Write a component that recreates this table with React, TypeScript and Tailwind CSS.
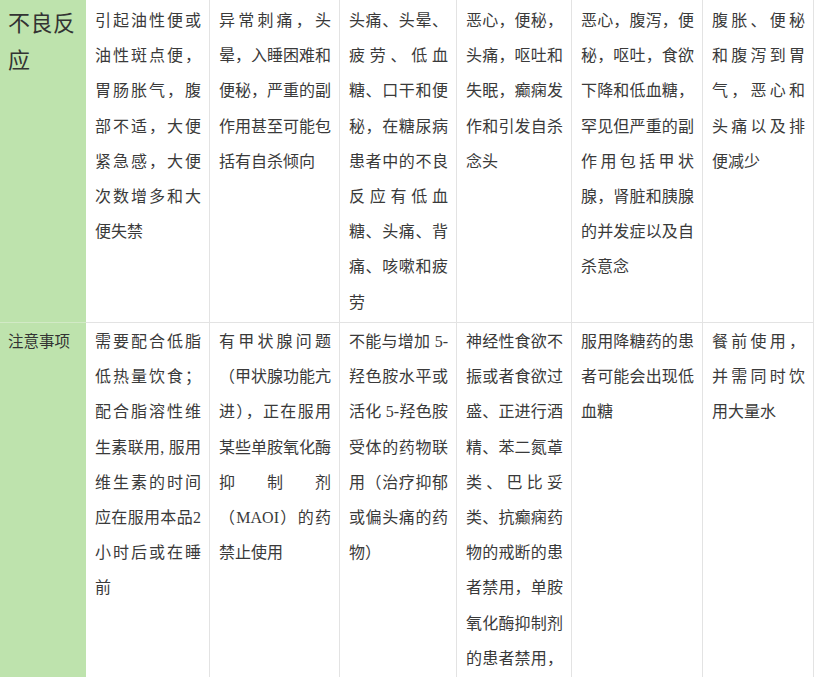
import React from "react";

type CellProps = {
  lines: string[];
  top?: boolean;
  cut?: boolean;
};

// 每行文字单独成行，整行两端对齐，最后一行左对齐
function Cell({ lines, top, cut }: CellProps) {
  return (
    <div
      className={`border-r border-[#e3e3e3] pl-[9px] pr-[8px] ${
        top ? "h-[323px] border-b pt-[3px]" : "h-[354px] pt-[1px]"
      }`}
    >
      {lines.map((line, i) => {
        const last = i === lines.length - 1 && !cut;
        return (
          <div
            key={i}
            className={`h-[35.2px] leading-[35.2px] ${
              last ? "text-left" : "text-justify [text-align-last:justify]"
            }`}
          >
            {line}
          </div>
        );
      })}
    </div>
  );
}

const row1: string[][] = [
  ["引起油性便或", "油性斑点便，", "胃肠胀气，腹", "部不适，大便", "紧急感，大便", "次数增多和大", "便失禁"],
  ["异常刺痛，头", "晕，入睡困难和", "便秘，严重的副", "作用甚至可能包", "括有自杀倾向"],
  ["头痛、头晕、", "疲劳、低血", "糖、口干和便", "秘，在糖尿病", "患者中的不良", "反应有低血", "糖、头痛、背", "痛、咳嗽和疲", "劳"],
  ["恶心，便秘，", "头痛，呕吐和", "失眠，癫痫发", "作和引发自杀", "念头"],
  ["恶心，腹泻，便", "秘，呕吐，食欲", "下降和低血糖，", "罕见但严重的副", "作用包括甲状", "腺，肾脏和胰腺", "的并发症以及自", "杀意念"],
  ["腹胀、便秘", "和腹泻到胃", "气，恶心和", "头痛以及排", "便减少"],
];

const row2: string[][] = [
  ["需要配合低脂", "低热量饮食；", "配合脂溶性维", "生素联用, 服用", "维生素的时间", "应在服用本品2", "小时后或在睡", "前"],
  ["有甲状腺问题", "（甲状腺功能亢", "进），正在服用", "某些单胺氧化酶", "抑制剂", "（MAOI）的药", "禁止使用"],
  ["不能与增加 5-", "羟色胺水平或", "活化 5-羟色胺", "受体的药物联", "用（治疗抑郁", "或偏头痛的药", "物）"],
  ["神经性食欲不", "振或者食欲过", "盛、正进行酒", "精、苯二氮䓬", "类、巴比妥", "类、抗癫痫药", "物的戒断的患", "者禁用，单胺", "氧化酶抑制剂", "的患者禁用，"],
  ["服用降糖药的患", "者可能会出现低", "血糖"],
  ["餐前使用，", "并需同时饮", "用大量水"],
];

export default function App() {
  return (
    <div
      className="h-[677px] w-[814px] overflow-hidden bg-white text-[16px] text-[#3a3a3a]"
      style={{ fontFamily: '"Liberation Serif", "Noto Sans CJK SC", serif' }}
    >
      <div className="grid grid-cols-[86px_124px_130px_117px_115px_131px_111px]">
        <div className="h-[323px] border-b border-[#d2eac6] bg-[#bee3ad] pl-[8px] pr-[4px] pt-[5px] text-[22px] leading-[37px] tracking-[0.5px] text-[#333]">
          不良反应
        </div>
        {row1.map((lines, i) => (
          <Cell key={i} lines={lines} top />
        ))}

        <div className="h-[354px] bg-[#bee3ad] pl-[8px] pt-[1px] text-[15.5px] leading-[35.2px] text-[#333]">
          注意事项
        </div>
        {row2.map((lines, i) => (
          <Cell key={i} lines={lines} cut={i === 3} />
        ))}
      </div>
    </div>
  );
}
